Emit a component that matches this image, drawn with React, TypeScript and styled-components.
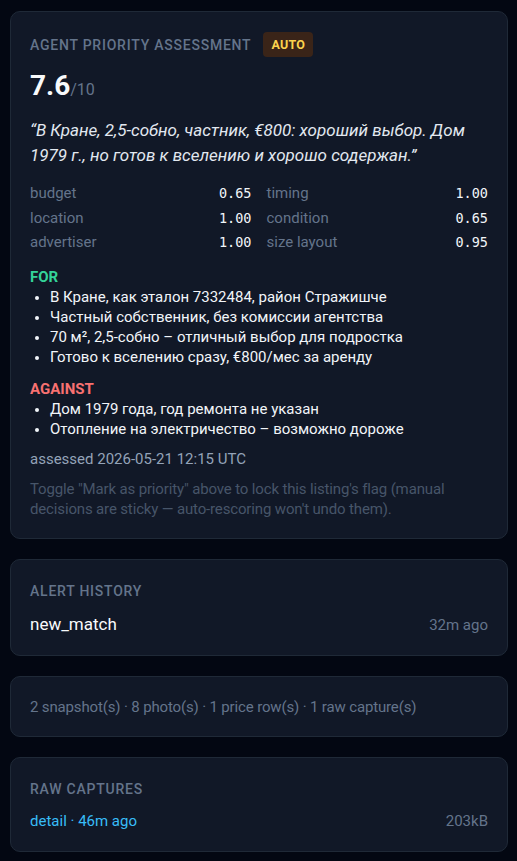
import React from "react";
import styled, { createGlobalStyle } from "styled-components";

const GlobalStyle = createGlobalStyle`
  html, body {
    margin: 0;
    padding: 0;
    background: #030712;
  }
  body {
    font-family: Roboto, "Noto Sans", sans-serif;
    color: #e5e7eb;
  }
`;

const scores = [
  { label: "budget", value: "0.65" },
  { label: "timing", value: "1.00" },
  { label: "location", value: "1.00" },
  { label: "condition", value: "0.65" },
  { label: "advertiser", value: "1.00" },
  { label: "size layout", value: "0.95" },
];

const pros = [
  "В Кране, как эталон 7332484, район Стражишче",
  "Частный собственник, без комиссии агентства",
  "70 м², 2,5-собно – отличный выбор для подростка",
  "Готово к вселению сразу, €800/мес за аренду",
];

const cons = [
  "Дом 1979 года, год ремонта не указан",
  "Отопление на электричество – возможно дороже",
];

const App = () => {
  return (
    <Page>
      <GlobalStyle />
      <Card>
        <HeaderRow>
          <SectionTitle>Agent priority assessment</SectionTitle>
          <Badge>AUTO</Badge>
        </HeaderRow>
        <ScoreLine>
          <Score>7.6</Score>
          <ScoreMax>/10</ScoreMax>
        </ScoreLine>
        <Quote>
          “В Кране, 2,5-собно, частник, €800: хороший выбор. Дом 1979 г., но
          готов к вселению и хорошо содержан.”
        </Quote>
        <ScoreGrid>
          {scores.map((s) => (
            <ScoreCell key={s.label}>
              <ScoreLabel>{s.label}</ScoreLabel>
              <ScoreValue>{s.value}</ScoreValue>
            </ScoreCell>
          ))}
        </ScoreGrid>
        <ListTitle $tone="for">FOR</ListTitle>
        <BulletList>
          {pros.map((p) => (
            <li key={p}>{p}</li>
          ))}
        </BulletList>
        <ListTitle $tone="against">AGAINST</ListTitle>
        <BulletList>
          {cons.map((c) => (
            <li key={c}>{c}</li>
          ))}
        </BulletList>
        <Assessed>assessed 2026-05-21 12:15 UTC</Assessed>
        <Hint>
          Toggle "Mark as priority" above to lock this listing's flag (manual
          decisions are sticky — auto-rescoring won't undo them).
        </Hint>
      </Card>

      <Card>
        <SectionTitle>Alert history</SectionTitle>
        <SplitRow>
          <AlertName>new_match</AlertName>
          <Muted>32m ago</Muted>
        </SplitRow>
      </Card>

      <Card>
        <Summary>
          2 snapshot(s) · 8 photo(s) · 1 price row(s) · 1 raw capture(s)
        </Summary>
      </Card>

      <Card>
        <SectionTitle>Raw captures</SectionTitle>
        <SplitRow>
          <Link>detail · 46m ago</Link>
          <Muted>203kB</Muted>
        </SplitRow>
      </Card>
    </Page>
  );
};

export default App;

const Page = styled.div`
  display: flex;
  flex-direction: column;
  gap: 20px;
  padding: 11px 9px 12px 10px;
`;

const Card = styled.section`
  background: #111827;
  border: 1px solid #1f2937;
  border-radius: 10px;
  padding: 20px 19px 19px 19px;
`;

const HeaderRow = styled.div`
  display: flex;
  align-items: center;
  gap: 12px;
`;

const SectionTitle = styled.h2`
  margin: 0;
  font-size: 14px;
  line-height: 22px;
  font-weight: 500;
  text-transform: uppercase;
  letter-spacing: 0.055em;
  color: #64748b;
`;

const Badge = styled.span`
  display: inline-flex;
  align-items: center;
  height: 25px;
  padding: 0 8px;
  border-radius: 4px;
  background: #3a2418;
  color: #fcd34d;
  font-size: 12.5px;
  font-weight: 700;
  letter-spacing: 0.02em;
`;

const ScoreLine = styled.div`
  display: flex;
  align-items: baseline;
  margin-top: 11px;
`;

const Score = styled.span`
  font-size: 28px;
  line-height: 36px;
  font-weight: 700;
  color: #f8fafc;
`;

const ScoreMax = styled.span`
  font-size: 16px;
  color: #64748b;
`;

const Quote = styled.p`
  margin: 14px 0 0;
  font-size: 17px;
  line-height: 25px;
  font-style: italic;
  color: #e2e8f0;
`;

const ScoreGrid = styled.div`
  display: grid;
  grid-template-columns: 1fr 1fr;
  grid-auto-rows: 24.5px;
  column-gap: 15px;
  margin-top: 13px;
`;

const ScoreCell = styled.div`
  display: flex;
  justify-content: space-between;
  align-items: center;
`;

const ScoreLabel = styled.span`
  font-size: 15px;
  color: #64748b;
`;

const ScoreValue = styled.span`
  font-family: "DejaVu Sans Mono", "Liberation Mono", monospace;
  font-size: 13.5px;
  color: #f1f5f9;
`;

const ListTitle = styled.div<{ $tone: "for" | "against" }>`
  margin-top: 12px;
  font-size: 15px;
  line-height: 20px;
  font-weight: 700;
  color: ${(p) => (p.$tone === "for" ? "#34d399" : "#f87171")};
`;

const BulletList = styled.ul`
  margin: 0;
  padding-left: 20px;
  font-size: 15px;
  line-height: 20px;
  color: #f1f5f9;

  li::marker {
    font-size: 13px;
  }
`;

const Assessed = styled.div`
  margin-top: 10px;
  font-size: 15px;
  line-height: 20px;
  color: #94a3b8;
`;

const Hint = styled.p`
  margin: 10px 0 0;
  font-size: 15px;
  line-height: 20px;
  letter-spacing: -0.01em;
  color: #475569;
`;

const SplitRow = styled.div`
  display: flex;
  justify-content: space-between;
  align-items: baseline;
  margin-top: 10px;
`;

const AlertName = styled.span`
  font-size: 17px;
  line-height: 24px;
  color: #f8fafc;
`;

const Muted = styled.span`
  font-size: 15px;
  color: #64748b;
`;

const Summary = styled.div`
  font-size: 15px;
  line-height: 20px;
  letter-spacing: -0.01em;
  color: #64748b;
`;

const Link = styled.a`
  font-size: 15px;
  line-height: 22px;
  color: #38bdf8;
  cursor: pointer;
`;
